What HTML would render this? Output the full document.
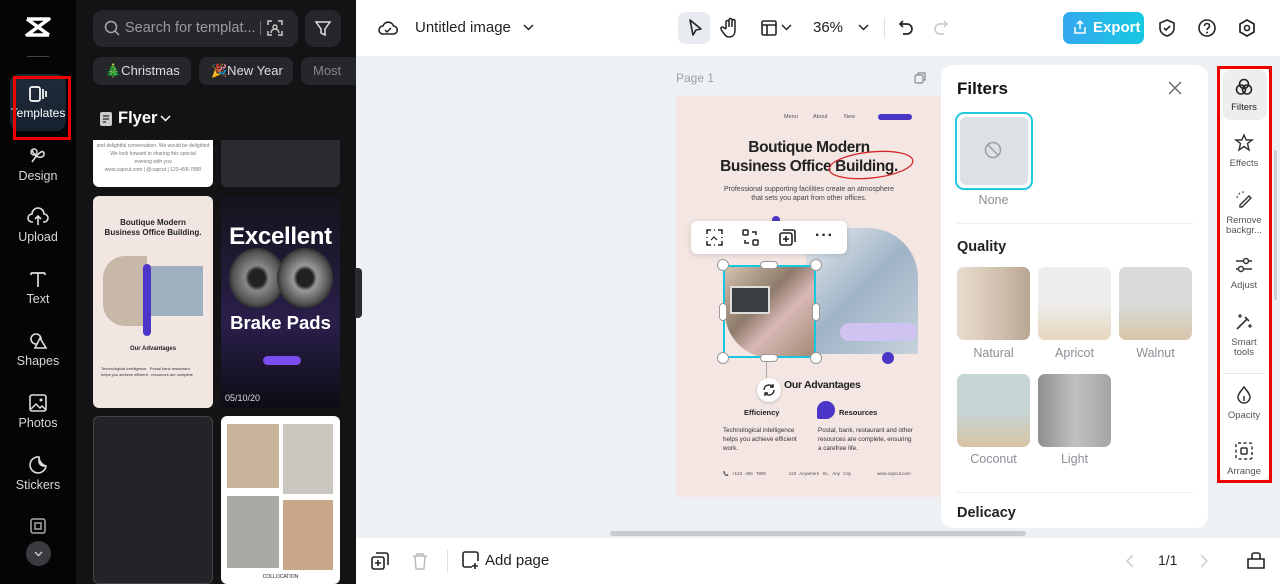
<!DOCTYPE html>
<html><head><meta charset="utf-8"><style>
*{box-sizing:border-box;margin:0;padding:0}
body{width:1280px;height:584px;overflow:hidden;font-family:"Liberation Sans",sans-serif;background:#eef1f4;position:relative}
.abs{position:absolute}
.nav{left:0;top:0;width:76px;height:584px;background:#050505}
.navi{position:absolute;left:0;width:76px;text-align:center;color:#d8d8d8;font-size:12.5px}
.navi svg{display:block;margin:0 auto 3px}
.panel{left:76px;top:0;width:280px;height:584px;background:#131316}
.chip{position:absolute;top:57px;height:28px;border-radius:8px;background:#26272b;color:#ddd;font-size:13px;line-height:28px;padding-left:12px}
.card{position:absolute;border-radius:6px;overflow:hidden}
.top{left:356px;top:0;width:924px;height:56px;background:#fff}
.bot{left:356px;top:538px;width:924px;height:46px;background:#fff}
.ico{position:absolute}
.fp{left:941px;top:65px;width:267px;height:463px;background:#fff;border-radius:12px}
.th{position:absolute;width:73px;height:73px;border-radius:7px}
.lbl{position:absolute;width:73px;text-align:center;font-size:12.5px;color:#8a8f96}
.rt{left:1219px;top:67px;width:50px;height:414px;background:#fff;border-radius:10px}
.ri{position:absolute;left:0;width:50px;text-align:center;font-size:9.5px;color:#555;line-height:10px}
.ri svg{display:block;margin:0 auto 6px}
</style></head><body>

<div class="abs nav">
 <svg class="ico" style="left:24px;top:16px" width="28" height="22" viewBox="0 0 28 22"><path d="M3 3h22L3 19h22M3 3l22 16" stroke="#fff" stroke-width="3.5" fill="none" stroke-linejoin="round"/></svg>
 <div class="abs" style="left:27px;top:56px;width:22px;height:1px;background:#444"></div>
 <div class="abs" style="left:10px;top:74px;width:56px;height:57px;border-radius:10px;background:linear-gradient(#1f2b3a,#162230)"></div>
 <div class="navi" style="top:85px;color:#fff;font-size:12px"><svg width="20" height="18" viewBox="0 0 20 18"><rect x="2" y="2" width="10" height="14" rx="2" stroke="#fff" stroke-width="1.7" fill="none"/><path d="M15 4v10M18 6v6" stroke="#fff" stroke-width="1.7"/></svg>Templates</div>
 <div class="abs" style="left:13px;top:76px;width:58px;height:64px;border:3px solid #e00"></div>
 <div class="navi" style="top:146px"><svg width="20" height="20" viewBox="0 0 20 20"><path d="M4 16C12 4 16 4 16 8S8 14 4 4" stroke="#ddd" stroke-width="1.6" fill="none"/><circle cx="6" cy="6" r="3" stroke="#ddd" stroke-width="1.5" fill="none"/></svg>Design</div>
 <div class="navi" style="top:207px"><svg width="22" height="20" viewBox="0 0 22 20"><path d="M6 15H5a4 4 0 010-8 6 6 0 0112 0 4 4 0 010 8h-1M11 9v9M8 12l3-3 3 3" stroke="#ddd" stroke-width="1.6" fill="none"/></svg>Upload</div>
 <div class="navi" style="top:269px"><svg width="20" height="20" viewBox="0 0 20 20"><path d="M3 4h14M10 4v14M3 4v2M17 4v2" stroke="#ddd" stroke-width="1.7" fill="none"/></svg>Text</div>
 <div class="navi" style="top:331px"><svg width="20" height="20" viewBox="0 0 20 20"><circle cx="8" cy="8" r="5" stroke="#ddd" stroke-width="1.6" fill="none"/><path d="M12 7l6 10H7z" stroke="#ddd" stroke-width="1.6" fill="#050505"/></svg>Shapes</div>
 <div class="navi" style="top:393px"><svg width="20" height="20" viewBox="0 0 20 20"><rect x="2" y="2" width="16" height="16" rx="2" stroke="#ddd" stroke-width="1.6" fill="none"/><path d="M3 16l5-5 4 4 2-2 4 4" stroke="#ddd" stroke-width="1.5" fill="none"/><circle cx="13" cy="7" r="1.5" fill="#ddd"/></svg>Photos</div>
 <div class="navi" style="top:455px"><svg width="20" height="20" viewBox="0 0 20 20"><path d="M18 11A8 8 0 1111 2c0 4 3 8 7 9zM11 2v4a5 5 0 005 5h2" stroke="#ddd" stroke-width="1.6" fill="none"/></svg>Stickers</div>
 <svg class="ico" style="left:29px;top:517px" width="18" height="18" viewBox="0 0 18 18"><rect x="2" y="2" width="14" height="14" rx="2" stroke="#aaa" stroke-width="1.5" fill="none"/><rect x="6" y="6" width="6" height="6" stroke="#aaa" stroke-width="1.5" fill="none"/></svg>
 <div class="abs" style="left:26px;top:541px;width:25px;height:25px;border-radius:50%;background:#3a3b40"></div>
 <svg class="ico" style="left:33px;top:548px" width="11" height="11" viewBox="0 0 11 11"><path d="M2 4l3.5 3.5L9 4" stroke="#ccc" stroke-width="1.4" fill="none"/></svg>
</div>

<div class="abs panel">
 <div class="abs" style="left:17px;top:10px;width:205px;height:37px;border-radius:10px;background:#26272b"></div>
 <svg class="ico" style="left:28px;top:20px" width="16" height="16" viewBox="0 0 16 16"><circle cx="7" cy="7" r="5.5" stroke="#aaa" stroke-width="1.5" fill="none"/><path d="M11 11l4 4" stroke="#aaa" stroke-width="1.5"/></svg>
 <div class="abs" style="left:49px;top:20px;color:#9a9a9e;font-size:14.5px">Search for templat...</div>
 <div class="abs" style="left:184px;top:21px;width:1px;height:14px;background:#666"></div>
 <svg class="ico" style="left:190px;top:19px" width="18" height="18" viewBox="0 0 18 18"><path d="M2 6V2h4M12 2h4v4M16 12v4h-4M6 16H2v-4" stroke="#ccc" stroke-width="1.5" fill="none"/><circle cx="9" cy="8" r="2" stroke="#ccc" stroke-width="1.4" fill="none"/><path d="M5 14a4 4 0 018 0" stroke="#ccc" stroke-width="1.4" fill="none"/></svg>
 <div class="abs" style="left:229px;top:10px;width:36px;height:37px;border-radius:10px;background:#26272b"></div>
 <svg class="ico" style="left:238px;top:20px" width="18" height="18" viewBox="0 0 18 18"><path d="M2 2h14l-5 7v6l-4-2V9z" stroke="#ddd" stroke-width="1.5" fill="none"/></svg>
 <div class="chip" style="left:17px;width:98px">🎄Christmas</div>
 <div class="chip" style="left:123px;width:94px">🎉New Year</div>
 <div class="chip" style="left:225px;width:55px;border-radius:8px 0 0 8px;color:#888">Most</div>
 <svg class="ico" style="left:23px;top:111px" width="14" height="16" viewBox="0 0 14 16"><rect x="1" y="1" width="12" height="14" rx="2" fill="#ccc"/><path d="M4 5h6M4 8h6M4 11h3" stroke="#222" stroke-width="1.3"/></svg>
 <div class="abs" style="left:42px;top:109px;color:#fff;font-size:16.5px;font-weight:bold">Flyer</div>
 <svg class="ico" style="left:84px;top:114px" width="11" height="9" viewBox="0 0 11 9"><path d="M1 2l4.5 4.5L10 2" stroke="#fff" stroke-width="1.5" fill="none"/></svg>

 <div class="card" style="left:17px;top:140px;width:120px;height:47px;background:#fff;border-radius:0 0 6px 6px">
  <div style="font-size:5px;color:#777;text-align:center;line-height:8px;padding-top:2px">and delightful conversation. We would be delighted<br>We look forward to sharing this special<br>evening with you<br>www.capcut.com | @capcut | 123-456-7890</div></div>
 <div class="card" style="left:145px;top:140px;width:119px;height:47px;background:#2a2b2f;border-radius:0 0 6px 6px"></div>

 <div class="card" style="left:17px;top:196px;width:120px;height:212px;background:#f2e6e3">
  <div style="font-size:8px;font-weight:bold;color:#222;text-align:center;margin-top:22px;line-height:10px">Boutique Modern<br>Business Office Building.</div>
  <div style="position:absolute;left:10px;top:60px;width:44px;height:70px;border-radius:22px 0 0 22px;background:#c8b8a8"></div>
  <div style="position:absolute;left:58px;top:70px;width:52px;height:50px;background:#9fb0c0"></div>
  <div style="position:absolute;left:50px;top:68px;width:8px;height:72px;border-radius:4px;background:#4b36c8"></div>
  <div style="font-size:6px;font-weight:bold;color:#222;text-align:center;position:absolute;top:150px;width:100%">Our Advantages</div>
  <div style="font-size:4px;color:#333;position:absolute;top:170px;left:8px;width:100px;line-height:6px">Technological intelligence &nbsp; Postal bank restaurant<br>helps you achieve efficient &nbsp; resources are complete</div>
 </div>
 <div class="card" style="left:145px;top:196px;width:119px;height:212px;background:linear-gradient(#15131c,#2a1f4a 60%,#0e0c14)">
  <div style="color:#fff;font-weight:bold;font-size:24px;text-align:center;margin-top:27px;letter-spacing:-.3px">Excellent</div>
  <div style="position:absolute;left:8px;top:52px;width:56px;height:60px;border-radius:50%;background:radial-gradient(#222 20%,#888 30%,#555 60%,#222 75%)"></div>
  <div style="position:absolute;left:56px;top:52px;width:56px;height:60px;border-radius:50%;background:radial-gradient(#222 20%,#999 30%,#555 60%,#222 75%)"></div>
  <div style="position:absolute;top:116px;width:100%;color:#fff;font-weight:bold;font-size:18.5px;text-align:center">Brake Pads</div>
  <div style="position:absolute;left:42px;top:160px;width:38px;height:9px;border-radius:5px;background:#7b4cf0"></div>
  <div style="position:absolute;left:4px;top:197px;color:#ddd;font-size:9px">05/10/20</div>
 </div>
 <div class="card" style="left:17px;top:416px;width:120px;height:168px;background:#232428;border:1px solid #444"></div>
 <div class="card" style="left:145px;top:416px;width:119px;height:168px;background:#fff">
  <div style="position:absolute;left:6px;top:8px;width:52px;height:64px;background:#c7b49a"></div>
  <div style="position:absolute;left:62px;top:8px;width:50px;height:70px;background:#c9c6c0"></div>
  <div style="position:absolute;left:6px;top:80px;width:52px;height:72px;background:#a9aaa6"></div>
  <div style="position:absolute;left:62px;top:84px;width:50px;height:70px;background:#c9a789"></div>
  <div style="position:absolute;top:158px;width:100%;text-align:center;font-size:5px;color:#222">COLLOCATION</div>
 </div>
 <div class="abs" style="left:279px;top:268px;width:7px;height:50px;background:#2a2b2f;border-radius:0 4px 4px 0"></div>
</div>

<div class="abs top">
 <svg class="ico" style="left:22px;top:19px" width="20" height="18" viewBox="0 0 20 18"><path d="M5 15a4 4 0 010-8 5.5 5.5 0 0110.5 0A4 4 0 0115 15z" stroke="#222" stroke-width="1.6" fill="none"/><path d="M7 11l2 2 4-4" stroke="#222" stroke-width="1.5" fill="none"/></svg>
 <div class="abs" style="left:59px;top:19px;font-size:15px;color:#222">Untitled image</div>
 <svg class="ico" style="left:167px;top:23px" width="11" height="9" viewBox="0 0 11 9"><path d="M1 2l4.5 4.5L10 2" stroke="#222" stroke-width="1.5" fill="none"/></svg>
 <div class="abs" style="left:322px;top:12px;width:32px;height:32px;border-radius:7px;background:#e8ebef"></div>
 <svg class="ico" style="left:330px;top:18px" width="18" height="20" viewBox="0 0 18 20"><path d="M4 2l11 9-5 1-3 5z" stroke="#222" stroke-width="1.6" fill="none" stroke-linejoin="round"/></svg>
 <svg class="ico" style="left:364px;top:17px" width="20" height="22" viewBox="0 0 20 22"><path d="M6 12V5a1.5 1.5 0 013 0v5V3a1.5 1.5 0 013 0v7V4a1.5 1.5 0 013 0v9c0 4-2 7-6 7-3 0-4-2-7-6l-1-2a1.5 1.5 0 012.5-1.5L6 12" stroke="#222" stroke-width="1.5" fill="none"/></svg>
 <svg class="ico" style="left:404px;top:19px" width="18" height="18" viewBox="0 0 18 18"><rect x="2" y="2" width="14" height="14" rx="1.5" stroke="#222" stroke-width="1.6" fill="none"/><path d="M2 6h14M7 6v10" stroke="#222" stroke-width="1.6"/></svg>
 <svg class="ico" style="left:425px;top:23px" width="11" height="9" viewBox="0 0 11 9"><path d="M1 2l4.5 4.5L10 2" stroke="#222" stroke-width="1.5" fill="none"/></svg>
 <div class="abs" style="left:457px;top:19px;font-size:15px;color:#222">36%</div>
 <svg class="ico" style="left:502px;top:23px" width="11" height="9" viewBox="0 0 11 9"><path d="M1 2l4.5 4.5L10 2" stroke="#222" stroke-width="1.5" fill="none"/></svg>
 <div class="abs" style="left:528px;top:18px;width:1px;height:20px;background:#e0e0e0"></div>
 <svg class="ico" style="left:541px;top:18px" width="18" height="20" viewBox="0 0 18 20"><path d="M6 3L3 6l3 3M3 6h7a5 5 0 010 10H6" stroke="#222" stroke-width="1.7" fill="none"/></svg>
 <svg class="ico" style="left:576px;top:18px" width="18" height="20" viewBox="0 0 18 20"><path d="M12 3l3 3-3 3M15 6H8a5 5 0 000 10h4" stroke="#ccc" stroke-width="1.7" fill="none"/></svg>
 <div class="abs" style="left:707px;top:12px;width:81px;height:32px;border-radius:7px;background:linear-gradient(90deg,#35a9f0,#16c8e0);color:#fff;font-size:15px;font-weight:bold;line-height:32px;padding-left:30px">Export</div>
 <svg class="ico" style="left:717px;top:19px" width="14" height="16" viewBox="0 0 14 16"><path d="M7 10V2M4 5l3-3 3 3M2 8v6h10V8" stroke="#fff" stroke-width="1.5" fill="none"/></svg>
 <svg class="ico" style="left:801px;top:18px" width="20" height="20" viewBox="0 0 20 20"><path d="M10 2l7 3v5c0 4-3 7-7 8-4-1-7-4-7-8V5z" stroke="#222" stroke-width="1.6" fill="none"/><path d="M7 10l2 2 4-4" stroke="#222" stroke-width="1.6" fill="none"/></svg>
 <svg class="ico" style="left:841px;top:18px" width="20" height="20" viewBox="0 0 20 20"><circle cx="10" cy="10" r="8" stroke="#222" stroke-width="1.6" fill="none"/><path d="M7.5 8a2.5 2.5 0 115 0c0 2-2.5 2-2.5 4" stroke="#222" stroke-width="1.6" fill="none"/><circle cx="10" cy="14.5" r="1" fill="#222"/></svg>
 <svg class="ico" style="left:881px;top:18px" width="20" height="20" viewBox="0 0 20 20"><path d="M10 2l7 4v8l-7 4-7-4V6z" stroke="#222" stroke-width="1.7" fill="none"/><circle cx="10" cy="10" r="2.5" stroke="#222" stroke-width="1.6" fill="none"/></svg>
</div>

<!-- canvas -->
<div class="abs" style="left:676px;top:71px;font-size:12px;color:#9aa0a6">Page 1</div>
<svg class="ico" style="left:914px;top:71px" width="13" height="13" viewBox="0 0 13 13"><rect x="1" y="4" width="8" height="8" rx="1.5" stroke="#888" stroke-width="1.2" fill="none"/><path d="M4 4V2h7v7H9" stroke="#888" stroke-width="1.2" fill="none"/></svg>
<div class="abs" style="left:676px;top:96px;width:266px;height:401px;background:#f3e6e3;overflow:hidden">
 <div class="abs" style="left:108px;top:18px;font-size:5.5px;color:#555">Menu</div>
 <div class="abs" style="left:137px;top:18px;font-size:5.5px;color:#555">About</div>
 <div class="abs" style="left:168px;top:18px;font-size:5.5px;color:#555">New</div>
 <div class="abs" style="left:202px;top:18px;width:34px;height:6px;border-radius:3px;background:#4b36c8"></div>
 <div class="abs" style="left:0;top:42px;width:266px;text-align:center;font-size:15.5px;font-weight:bold;color:#222;line-height:19px;letter-spacing:-.4px">Boutique Modern<br>Business Office Building.</div>
 <svg class="ico" style="left:150px;top:52px" width="90" height="34" viewBox="0 0 90 34"><ellipse cx="45" cy="17" rx="42" ry="13" stroke="#d42a2a" stroke-width="1.3" fill="none" transform="rotate(-6 45 17)"/></svg>
 <div class="abs" style="left:0;top:89px;width:266px;text-align:center;font-size:7px;color:#444;line-height:9px">Professional supporting facilities create an atmosphere<br>that sets you apart from other offices.</div>
 <div class="abs" style="left:96px;top:120px;width:8px;height:8px;border-radius:50%;background:#4b36c8"></div>
 <div class="abs" style="left:130px;top:132px;width:112px;height:126px;border-radius:0 50px 0 0;background:linear-gradient(135deg,#e8ecef,#9fb3c6 50%,#c8d2dc)"></div>
 <div class="abs" style="left:164px;top:227px;width:77px;height:18px;border-radius:9px;background:#cfc3f2"></div>
 <div class="abs" style="left:206px;top:256px;width:12px;height:12px;border-radius:50%;background:#4b36c8"></div>
 <div class="abs" style="left:49px;top:169px;width:91px;height:93px;border-radius:0 0 0 46px;background:linear-gradient(135deg,#d7c4b0,#8e7a6a 40%,#d9b8b6 60%,#a08870)"></div>
 <div class="abs" style="left:54px;top:190px;width:40px;height:28px;background:#3a3d42;border:2px solid #ddd"></div>
 <div class="abs" style="left:108px;top:283px;font-size:10.5px;font-weight:bold;color:#222;letter-spacing:-.3px">Our Advantages</div>
 <div class="abs" style="left:68px;top:312px;font-size:7.5px;font-weight:bold;color:#222">Efficiency</div>
 <div class="abs" style="left:141px;top:305px;width:18px;height:18px;border-radius:9px 9px 9px 2px;background:#4b36c8"></div>
 <div class="abs" style="left:163px;top:312px;font-size:7.5px;font-weight:bold;color:#222">Resources</div>
 <div class="abs" style="left:47px;top:330px;font-size:6.3px;color:#333;line-height:9px">Technological intelligence<br>helps you achieve efficient<br>work.</div>
 <div class="abs" style="left:142px;top:330px;font-size:6.3px;color:#333;line-height:9px">Postal, bank, restaurant and other<br>resources are complete, ensuring<br>a carefree life.</div>
 <div class="abs" style="left:47px;top:375px;font-size:4.5px;color:#555;word-spacing:2px">📞 +123 456 7890 &nbsp;&nbsp;&nbsp;&nbsp;&nbsp; 123 Anywhere St., Any City &nbsp;&nbsp;&nbsp;&nbsp;&nbsp;&nbsp; www.capcut.com</div>
</div>
<!-- selection -->
<div class="abs" style="left:723px;top:265px;width:93px;height:93px;border:2px solid #18c6de"></div>
<div class="abs" style="left:766px;top:358px;width:1px;height:22px;background:#aaa"></div>
<div class="abs" style="left:757px;top:378px;width:24px;height:24px;border-radius:50%;background:#fff;box-shadow:0 1px 3px rgba(0,0,0,.2)"></div>
<svg class="ico" style="left:762px;top:383px" width="14" height="14" viewBox="0 0 14 14"><path d="M2 7a5 5 0 019-3M12 7a5 5 0 01-9 3M11 1v3H8M3 13v-3h3" stroke="#222" stroke-width="1.4" fill="none"/></svg>
<div class="abs" style="left:717px;top:259px;width:12px;height:12px;border-radius:50%;background:#fff;border:1px solid #999"></div>
<div class="abs" style="left:810px;top:259px;width:12px;height:12px;border-radius:50%;background:#fff;border:1px solid #999"></div>
<div class="abs" style="left:717px;top:352px;width:12px;height:12px;border-radius:50%;background:#fff;border:1px solid #999"></div>
<div class="abs" style="left:810px;top:352px;width:12px;height:12px;border-radius:50%;background:#fff;border:1px solid #999"></div>
<div class="abs" style="left:760px;top:261px;width:18px;height:8px;border-radius:4px;background:#fff;border:1px solid #999"></div>
<div class="abs" style="left:760px;top:354px;width:18px;height:8px;border-radius:4px;background:#fff;border:1px solid #999"></div>
<div class="abs" style="left:719px;top:303px;width:8px;height:18px;border-radius:4px;background:#fff;border:1px solid #999"></div>
<div class="abs" style="left:812px;top:303px;width:8px;height:18px;border-radius:4px;background:#fff;border:1px solid #999"></div>
<div class="abs" style="left:691px;top:221px;width:156px;height:33px;border-radius:6px;background:#fff;box-shadow:0 1px 6px rgba(0,0,0,.15)"></div>
<svg class="ico" style="left:706px;top:229px" width="17" height="17" viewBox="0 0 17 17"><path d="M1 5V1h4M12 1h4v4M16 12v4h-4M5 16H1v-4M8 1h1M8 16h1M1 8v1M16 8v1" stroke="#222" stroke-width="1.5" fill="none"/><path d="M5 11l3-3 3 3" stroke="#222" stroke-width="1.2" fill="none"/></svg>
<svg class="ico" style="left:742px;top:229px" width="17" height="17" viewBox="0 0 17 17"><rect x="1" y="1" width="5" height="5" rx="1" stroke="#222" stroke-width="1.5" fill="none"/><rect x="11" y="11" width="5" height="5" rx="1" stroke="#222" stroke-width="1.5" fill="none"/><path d="M10 3h4v3M7 14H3v-3" stroke="#222" stroke-width="1.5" fill="none"/></svg>
<svg class="ico" style="left:779px;top:229px" width="17" height="17" viewBox="0 0 17 17"><rect x="1" y="4" width="12" height="12" rx="2" stroke="#222" stroke-width="1.6" fill="none"/><path d="M4 1h10a2 2 0 012 2v10M7 7v6M4 10h6" stroke="#222" stroke-width="1.6" fill="none"/></svg>
<div class="abs" style="left:815px;top:227px;font-size:16px;font-weight:bold;color:#222;letter-spacing:1px">···</div>

<!-- filters -->
<div class="abs fp">
 <div class="abs" style="left:16px;top:14px;font-size:17px;font-weight:bold;color:#111">Filters</div>
 <svg class="ico" style="left:227px;top:16px" width="14" height="14" viewBox="0 0 14 14"><path d="M1 1l12 12M13 1L1 13" stroke="#666" stroke-width="1.4"/></svg>
 <div class="abs" style="left:14px;top:47px;width:78px;height:78px;border:2px solid #22c7e0;border-radius:9px;padding:3px"><div style="width:100%;height:100%;background:#dde1e6;border-radius:6px"></div></div>
 <svg class="ico" style="left:43px;top:76px" width="18" height="18" viewBox="0 0 18 18"><circle cx="9" cy="9" r="7.5" stroke="#9aa0a6" stroke-width="1.5" fill="none"/><path d="M4 4l10 10" stroke="#9aa0a6" stroke-width="1.5"/></svg>
 <div class="lbl" style="left:16px;top:128px">None</div>
 <div class="abs" style="left:16px;top:158px;width:236px;height:1px;background:#eee"></div>
 <div class="abs" style="left:16px;top:174px;font-size:14.5px;font-weight:bold;color:#222">Quality</div>
 <div class="th" style="left:16px;top:202px;background:linear-gradient(90deg,#e9dcce,#d0bfae 60%,#b9a594)"></div>
 <div class="th" style="left:97px;top:202px;background:linear-gradient(#eeeeec 50%,#e6d6bd)"></div>
 <div class="th" style="left:178px;top:202px;background:linear-gradient(#d9dcda 50%,#d8c5a8)"></div>
 <div class="lbl" style="left:16px;top:281px">Natural</div>
 <div class="lbl" style="left:97px;top:281px">Apricot</div>
 <div class="lbl" style="left:178px;top:281px">Walnut</div>
 <div class="th" style="left:16px;top:309px;background:linear-gradient(#c6d6d6 50%,#d7c4a2)"></div>
 <div class="th" style="left:97px;top:309px;background:linear-gradient(90deg,#8d8f91,#c0c0c0 50%,#a5a5a6)"></div>
 <div class="lbl" style="left:16px;top:387px">Coconut</div>
 <div class="lbl" style="left:97px;top:387px">Light</div>
 <div class="abs" style="left:16px;top:427px;width:236px;height:1px;background:#eee"></div>
 <div class="abs" style="left:16px;top:440px;font-size:14.5px;font-weight:bold;color:#222">Delicacy</div>
</div>

<!-- right toolbar -->
<div class="abs rt">
 <div class="abs" style="left:4px;top:3px;width:44px;height:50px;border-radius:8px;background:#eceef0"></div>
 <div class="ri" style="top:10px"><svg width="20" height="20" viewBox="0 0 20 20"><circle cx="10" cy="7" r="4.5" stroke="#222" stroke-width="1.6" fill="none"/><circle cx="7" cy="12.5" r="4.5" stroke="#222" stroke-width="1.6" fill="none"/><circle cx="13" cy="12.5" r="4.5" stroke="#222" stroke-width="1.6" fill="none"/></svg><span style="color:#222">Filters</span></div>
 <div class="ri" style="top:66px"><svg width="20" height="20" viewBox="0 0 20 20"><path d="M10 2l2.2 5H18l-4.5 3.5L15 17l-5-3.5L5 17l1.5-6.5L2 7h5.8z" stroke="#333" stroke-width="1.4" fill="none"/></svg>Effects</div>
 <div class="ri" style="top:123px"><svg width="20" height="20" viewBox="0 0 20 20"><path d="M3 8a7 7 0 017-6" stroke="#555" stroke-width="1.3" stroke-dasharray="2 2" fill="none"/><path d="M6 15l9-9 2 2-9 9H6z" stroke="#333" stroke-width="1.4" fill="none"/></svg>Remove<br>backgr...</div>
 <div class="ri" style="top:188px"><svg width="20" height="20" viewBox="0 0 20 20"><path d="M2 6h16M2 14h16" stroke="#333" stroke-width="1.5"/><circle cx="12" cy="6" r="2.5" fill="#fff" stroke="#333" stroke-width="1.5"/><circle cx="7" cy="14" r="2.5" fill="#fff" stroke="#333" stroke-width="1.5"/></svg>Adjust</div>
 <div class="ri" style="top:245px"><svg width="20" height="20" viewBox="0 0 20 20"><path d="M3 17L13 7M11 5l4 4" stroke="#333" stroke-width="1.6"/><path d="M6 2v4M4 4h4M16 12v4M14 14h4" stroke="#333" stroke-width="1.3"/></svg>Smart<br>tools</div>
 <div class="abs" style="left:4px;top:306px;width:42px;height:1px;background:#e6e6e6"></div>
 <div class="ri" style="top:318px"><svg width="20" height="20" viewBox="0 0 20 20"><path d="M10 2c3 4 6 7 6 10a6 6 0 01-12 0c0-3 3-6 6-10z" stroke="#333" stroke-width="1.5" fill="none"/><path d="M10 11v5" stroke="#333" stroke-width="1.5"/></svg>Opacity</div>
 <div class="ri" style="top:374px"><svg width="20" height="20" viewBox="0 0 20 20"><rect x="2" y="2" width="16" height="16" rx="2" stroke="#333" stroke-width="1.5" stroke-dasharray="3 2.5" fill="none"/><rect x="7" y="7" width="6" height="6" rx="1" stroke="#333" stroke-width="1.5" fill="none"/></svg>Arrange</div>
</div>
<div class="abs" style="left:1217px;top:66px;width:55px;height:417px;border:3px solid #e00"></div>
<div class="abs" style="left:1274px;top:150px;width:3px;height:150px;background:#ccc;border-radius:2px"></div>

<div class="abs" style="left:610px;top:531px;width:416px;height:5px;border-radius:3px;background:#c8ccd0"></div>

<div class="abs bot">
 <svg class="ico" style="left:15px;top:14px" width="18" height="18" viewBox="0 0 18 18"><rect x="1" y="5" width="12" height="12" rx="2" stroke="#222" stroke-width="1.6" fill="none"/><path d="M5 1h10a2 2 0 012 2v10M7 8v6M4 11h6" stroke="#222" stroke-width="1.6" fill="none"/></svg>
 <svg class="ico" style="left:56px;top:14px" width="16" height="18" viewBox="0 0 16 18"><path d="M1 4h14M5 4V2h6v2M3 4l1 13h8l1-13" stroke="#bbb" stroke-width="1.5" fill="none"/></svg>
 <div class="abs" style="left:91px;top:12px;width:1px;height:22px;background:#e0e0e0"></div>
 <svg class="ico" style="left:106px;top:13px" width="18" height="18" viewBox="0 0 18 18"><path d="M10 16H3a2 2 0 01-2-2V3a2 2 0 012-2h11a2 2 0 012 2v7M13 12v6M10 15h6" stroke="#222" stroke-width="1.6" fill="none"/></svg>
 <div class="abs" style="left:129px;top:14px;font-size:15px;color:#222">Add page</div>
 <svg class="ico" style="left:769px;top:15px" width="10" height="16" viewBox="0 0 10 16"><path d="M8 2L2 8l6 6" stroke="#ccc" stroke-width="1.5" fill="none"/></svg>
 <div class="abs" style="left:802px;top:14px;font-size:14px;color:#222">1/1</div>
 <svg class="ico" style="left:843px;top:15px" width="10" height="16" viewBox="0 0 10 16"><path d="M2 2l6 6-6 6" stroke="#ccc" stroke-width="1.5" fill="none"/></svg>
 <svg class="ico" style="left:890px;top:13px" width="20" height="18" viewBox="0 0 20 18"><path d="M2 8h16v9H2zM6 8V4a2 2 0 012-2h4a2 2 0 012 2v4" stroke="#222" stroke-width="1.6" fill="none"/></svg>
</div>
</body></html>
